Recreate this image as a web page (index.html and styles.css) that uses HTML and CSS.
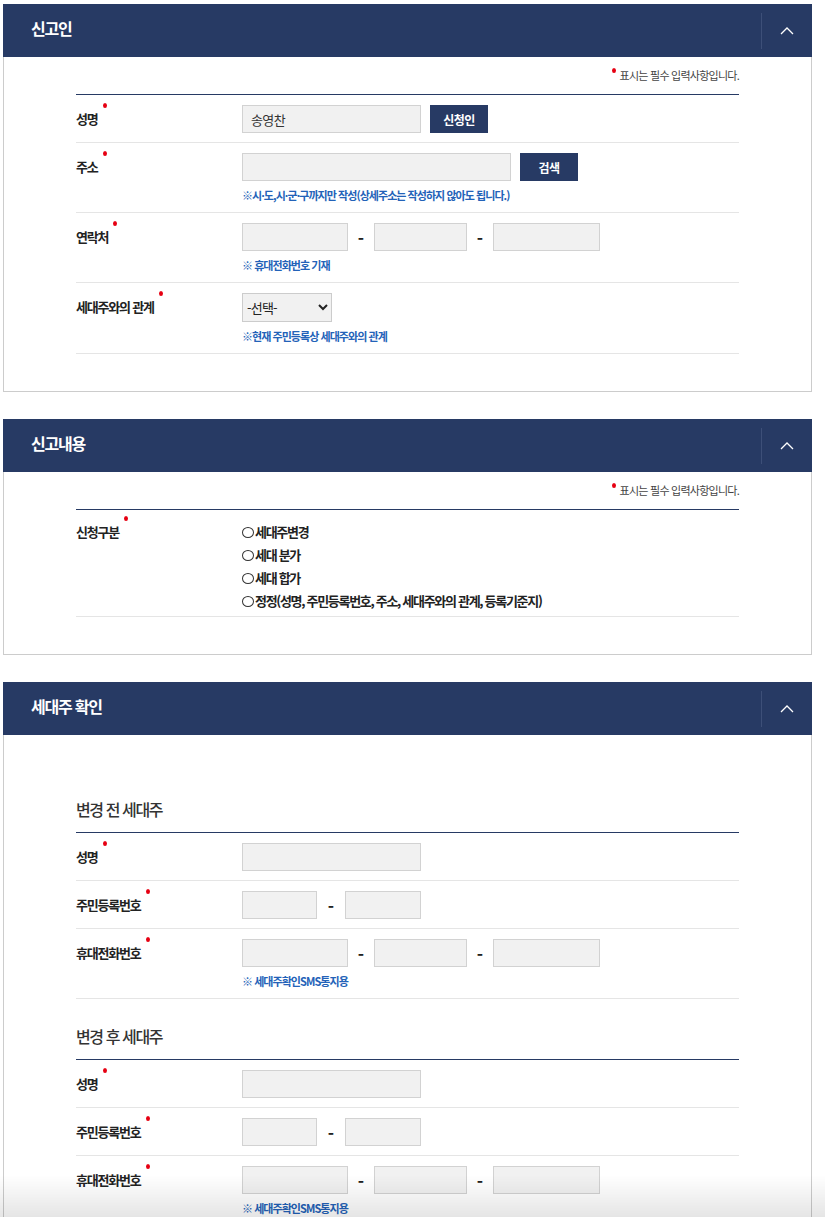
FILE: index.html
```html
<!DOCTYPE html>
<html lang="ko">
<head>
<meta charset="UTF-8">
<meta name="viewport" content="width=device-width, initial-scale=1.0">
<title>세대주 변경 신고</title>
<link rel="stylesheet" href="styles.css">
</head>
<body>

<div class="wrap">

  <!-- 신고인 -->
  <div class="section">
    <div class="sec-head">
      <h3 class="sec-title">신고인</h3>
      <button type="button" class="sec-toggle">
        <svg width="14" height="8" viewBox="0 0 14 8"><polyline points="1,7 7,1 13,7" fill="none" stroke="#fff" stroke-width="1.3"/></svg>
      </button>
    </div>
    <div class="sec-body">
      <p class="notice"><span class="req-dot"></span>표시는 필수 입력사항입니다.</p>
      <div class="form-table">
        <div class="row">
          <div class="label"><span class="req">성명</span></div>
          <div class="field">
            <div class="line">
              <input type="text" class="inp w-name" value="송영찬">
              <button type="button" class="btn">신청인</button>
            </div>
          </div>
        </div>
        <div class="row">
          <div class="label"><span class="req">주소</span></div>
          <div class="field">
            <div class="line">
              <input type="text" class="inp w-addr">
              <button type="button" class="btn">검색</button>
            </div>
            <p class="hint">※시·도,시·군·구까지만 작성(상세주소는 작성하지 않아도 됩니다.)</p>
          </div>
        </div>
        <div class="row">
          <div class="label"><span class="req">연락처</span></div>
          <div class="field">
            <div class="line">
              <input type="text" class="inp w-p1">
              <span class="dash">-</span>
              <input type="text" class="inp w-p2">
              <span class="dash">-</span>
              <input type="text" class="inp w-p3">
            </div>
            <p class="hint">※ 휴대전화번호 기재</p>
          </div>
        </div>
        <div class="row">
          <div class="label"><span class="req">세대주와의 관계</span></div>
          <div class="field">
            <div class="line">
              <select class="sel">
                <option>-선택-</option>
                <option>본인</option>
                <option>배우자</option>
                <option>자녀</option>
              </select>
            </div>
            <p class="hint">※현재 주민등록상 세대주와의 관계</p>
          </div>
        </div>
      </div>
    </div>
  </div>

  <!-- 신고내용 -->
  <div class="section">
    <div class="sec-head">
      <h3 class="sec-title">신고내용</h3>
      <button type="button" class="sec-toggle">
        <svg width="14" height="8" viewBox="0 0 14 8"><polyline points="1,7 7,1 13,7" fill="none" stroke="#fff" stroke-width="1.3"/></svg>
      </button>
    </div>
    <div class="sec-body">
      <p class="notice"><span class="req-dot"></span>표시는 필수 입력사항입니다.</p>
      <div class="form-table">
        <div class="row row-radio">
          <div class="label"><span class="req">신청구분</span></div>
          <div class="field">
            <label class="radio">세대주변경</label>
            <label class="radio">세대 분가</label>
            <label class="radio">세대 합가</label>
            <label class="radio">정정(성명, 주민등록번호, 주소, 세대주와의 관계, 등록기준지)</label>
          </div>
        </div>
      </div>
    </div>
  </div>

  <!-- 세대주 확인 -->
  <div class="section">
    <div class="sec-head">
      <h3 class="sec-title">세대주 확인</h3>
      <button type="button" class="sec-toggle">
        <svg width="14" height="8" viewBox="0 0 14 8"><polyline points="1,7 7,1 13,7" fill="none" stroke="#fff" stroke-width="1.3"/></svg>
      </button>
    </div>
    <div class="sec-body sec-body-tall">
      <h4 class="sub-title">변경 전 세대주</h4>
      <div class="form-table">
        <div class="row">
          <div class="label"><span class="req">성명</span></div>
          <div class="field">
            <div class="line"><input type="text" class="inp w-name"></div>
          </div>
        </div>
        <div class="row">
          <div class="label"><span class="req">주민등록번호</span></div>
          <div class="field">
            <div class="line">
              <input type="text" class="inp w-j1">
              <span class="dash dash-j">-</span>
              <input type="text" class="inp w-j2">
            </div>
          </div>
        </div>
        <div class="row">
          <div class="label"><span class="req">휴대전화번호</span></div>
          <div class="field">
            <div class="line">
              <input type="text" class="inp w-p1">
              <span class="dash">-</span>
              <input type="text" class="inp w-p2">
              <span class="dash">-</span>
              <input type="text" class="inp w-p3">
            </div>
            <p class="hint">※ 세대주확인SMS통지용</p>
          </div>
        </div>
      </div>

      <h4 class="sub-title">변경 후 세대주</h4>
      <div class="form-table">
        <div class="row">
          <div class="label"><span class="req">성명</span></div>
          <div class="field">
            <div class="line"><input type="text" class="inp w-name"></div>
          </div>
        </div>
        <div class="row">
          <div class="label"><span class="req">주민등록번호</span></div>
          <div class="field">
            <div class="line">
              <input type="text" class="inp w-j1">
              <span class="dash dash-j">-</span>
              <input type="text" class="inp w-j2">
            </div>
          </div>
        </div>
        <div class="row">
          <div class="label"><span class="req">휴대전화번호</span></div>
          <div class="field">
            <div class="line">
              <input type="text" class="inp w-p1">
              <span class="dash">-</span>
              <input type="text" class="inp w-p2">
              <span class="dash">-</span>
              <input type="text" class="inp w-p3">
            </div>
            <p class="hint">※ 세대주확인SMS통지용</p>
          </div>
        </div>
      </div>
    </div>
  </div>

</div>

<div class="bottom-fade"></div>

</body>
</html>
```

FILE: styles.css
```css
body {
  margin: 0;
  background: #fff;
  color: #222;
  font-family: "Noto Sans CJK KR", "Noto Sans", sans-serif;
}
.wrap {
  width: 809px;
  margin: 4px 0 0 3px;
}
.section {
  margin-bottom: 27px;
}

/* header bar */
.sec-head {
  display: flex;
  height: 53px;
  background-color: #273a64;
}
.sec-title {
  flex: 1;
  margin: 0;
  padding: 0 0 5px 28px;
  display: flex;
  align-items: center;
  color: #fff;
  font-size: 16px;
  font-weight: 700;
  letter-spacing: -1.2px;
}
.sec-toggle {
  width: 51px;
  margin: 9px 0 8px;
  padding: 0;
  border: none;
  border-left: 1px solid #3d4f78;
  background: none;
  display: flex;
  justify-content: center;
  align-items: center;
  cursor: pointer;
}

/* body box */
.sec-body {
  border: 1px solid #ccc;
  border-top: none;
  padding: 10px 72px 37px;
}
.sec-body-tall {
  padding-top: 37px;
  padding-bottom: 120px;
}
.notice {
  margin: 0 0 11px;
  text-align: right;
  font-size: 11px;
  line-height: 16px;
  color: #444;
  letter-spacing: -0.75px;
}
.req-dot {
  display: inline-block;
  width: 4px;
  height: 5px;
  margin-right: 4px;
  border-radius: 50%;
  background: #e60012;
  vertical-align: 7px;
}
.sub-title {
  margin: 25px 0 11px;
  font-size: 16px;
  line-height: 24px;
  font-weight: 500;
  color: #333;
  letter-spacing: -1.4px;
}

/* form rows */
.form-table {
  border-top: 1px solid #273a64;
}
.row {
  display: flex;
  padding: 10px 0 9px;
  border-bottom: 1px solid #e5e5e5;
}
.label {
  width: 166px;
  flex-shrink: 0;
  font-size: 13px;
  line-height: 28px;
  font-weight: 700;
  color: #222;
  letter-spacing: -1.2px;
}
.req {
  position: relative;
}
.req::after {
  content: "";
  position: absolute;
  right: -9px;
  top: -6px;
  width: 4px;
  height: 5px;
  border-radius: 50%;
  background: #e60012;
}
.field {
  flex: 1;
}
.line {
  display: flex;
  align-items: center;
}
.inp {
  box-sizing: border-box;
  height: 28px;
  padding: 0 8px;
  border: 1px solid #d2d2d2;
  background: #f1f1f1;
  font-family: inherit;
  font-size: 13px;
  color: #333;
  letter-spacing: -0.6px;
}
.w-name { width: 179px; }
.w-addr { width: 269px; }
.w-p1 { width: 106px; }
.w-p2 { width: 93px; }
.w-p3 { width: 107px; }
.w-j1 { width: 75px; }
.w-j2 { width: 76px; }
.dash {
  width: 26px;
  text-align: center;
  font-weight: 700;
  font-size: 17px;
  color: #222;
}
.dash-j {
  width: 28px;
}
.btn {
  height: 28px;
  width: 58px;
  margin-left: 9px;
  border: none;
  background-color: #273a64;
  color: #fff;
  font-family: inherit;
  font-size: 12px;
  font-weight: 700;
  letter-spacing: -0.6px;
  cursor: pointer;
}
.sel {
  width: 90px;
  height: 29px;
  border: 1px solid #ccc;
  background-color: #f1f1f1;
  font-family: inherit;
  font-size: 13px;
  color: #222;
  letter-spacing: -0.8px;
}
.hint {
  margin: 6px 0 0;
  font-size: 11px;
  line-height: 16px;
  font-weight: 700;
  color: #2362b8;
  letter-spacing: -0.95px;
}

/* radio list */
.row-radio {
  padding: 10px 0 4px;
}
.row-radio .label {
  line-height: 23px;
}
.radio {
  display: block;
  font-size: 13px;
  line-height: 23px;
  font-weight: 700;
  color: #222;
  letter-spacing: -1.3px;
}
.radio::before {
  content: "";
  display: inline-block;
  box-sizing: border-box;
  width: 12px;
  height: 11px;
  margin-right: 1px;
  border: 1px solid #333;
  border-radius: 50%;
  vertical-align: -1px;
}

.bottom-fade {
  position: fixed;
  left: 0;
  right: 0;
  bottom: 0;
  height: 42px;
  background: linear-gradient(to bottom, rgba(0, 0, 0, 0), rgba(0, 0, 0, 0.1));
  pointer-events: none;
}
```
